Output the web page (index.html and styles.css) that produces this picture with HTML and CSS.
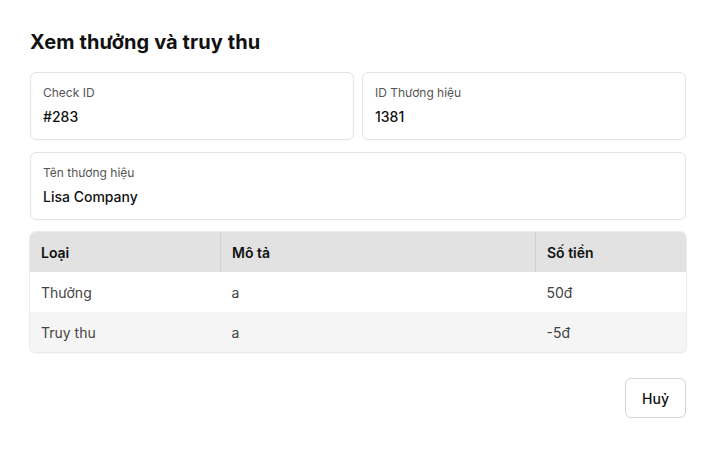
FILE: index.html
```html
<!DOCTYPE html>
<html lang="vi">
<head>
    <meta charset="UTF-8">
    <meta name="viewport" content="width=device-width, initial-scale=1.0">
    <title>Xem thưởng và truy thu</title>
    <link rel="stylesheet" href="styles.css">
</head>
<body>
    <div class="modal">
        <h1 class="modal-title">Xem thưởng và truy thu</h1>

        <div class="field-row">
            <div class="field">
                <div class="field-label">Check ID</div>
                <div class="field-value">#283</div>
            </div>
            <div class="field">
                <div class="field-label">ID Thương hiệu</div>
                <div class="field-value">1381</div>
            </div>
        </div>

        <div class="field field-wide">
            <div class="field-label">Tên thương hiệu</div>
            <div class="field-value">Lisa Company</div>
        </div>

        <div class="table-wrap">
            <table class="items">
                <thead>
                    <tr>
                        <th class="col-type">Loại</th>
                        <th class="col-desc">Mô tả</th>
                        <th class="col-amount">Số tiền</th>
                    </tr>
                </thead>
                <tbody>
                    <tr>
                        <td>Thưởng</td>
                        <td>a</td>
                        <td>50đ</td>
                    </tr>
                    <tr>
                        <td>Truy thu</td>
                        <td>a</td>
                        <td>-5đ</td>
                    </tr>
                </tbody>
            </table>
        </div>

        <div class="actions">
            <button class="btn" type="button">Huỷ</button>
        </div>
    </div>
</body>
</html>
```

FILE: styles.css
```css
body {
    margin: 0;
    font-family: Inter, "Noto Sans", sans-serif;
    background-color: #fff;
    color: #111;
}
.modal {
    padding: 28px 30px;
}
.modal-title {
    margin: 0 0 16px;
    font-size: 20px;
    line-height: 28px;
    font-weight: 700;
    letter-spacing: 0.1px;
    color: #111;
}
.field-row {
    display: grid;
    grid-template-columns: 1fr 1fr;
    gap: 8px;
    margin-bottom: 12px;
}
.field {
    border: 1px solid #e4e4e4;
    border-radius: 6px;
    padding: 12px 12px 12px;
}
.field-wide {
    margin-bottom: 12px;
}
.field-label {
    font-size: 12px;
    line-height: 16px;
    color: #555;
    margin-bottom: 6px;
}
.field-value {
    font-size: 14px;
    line-height: 20px;
    font-weight: 500;
    color: #111;
}
.table-wrap {
    border-radius: 6px;
    overflow: hidden;
    box-shadow: 0 0 0 1px #ececec, 0 1px 2px rgba(0,0,0,0.12);
}
.items {
    width: 100%;
    border-collapse: collapse;
    table-layout: fixed;
    font-size: 14px;
}
.items th {
    background-color: #e2e2e2;
    font-weight: 600;
    text-align: left;
    height: 40px;
    padding: 0 11px;
    color: #111;
}
.items th + th {
    border-left: 1px solid #cdd1d8;
}
.col-type {
    width: 168px;
}
.col-amount {
    width: 128px;
}
.items td {
    height: 40px;
    padding: 0 11px;
    color: #444;
}
.items tbody tr:nth-child(even) {
    background-color: #f5f5f5;
}
.actions {
    display: flex;
    justify-content: flex-end;
    margin-top: 26px;
}
.btn {
    font-family: inherit;
    font-size: 14px;
    font-weight: 500;
    color: #111;
    background-color: #fff;
    border: 1px solid #d4d4d4;
    border-radius: 6px;
    height: 40px;
    padding: 0 16px;
}
```
